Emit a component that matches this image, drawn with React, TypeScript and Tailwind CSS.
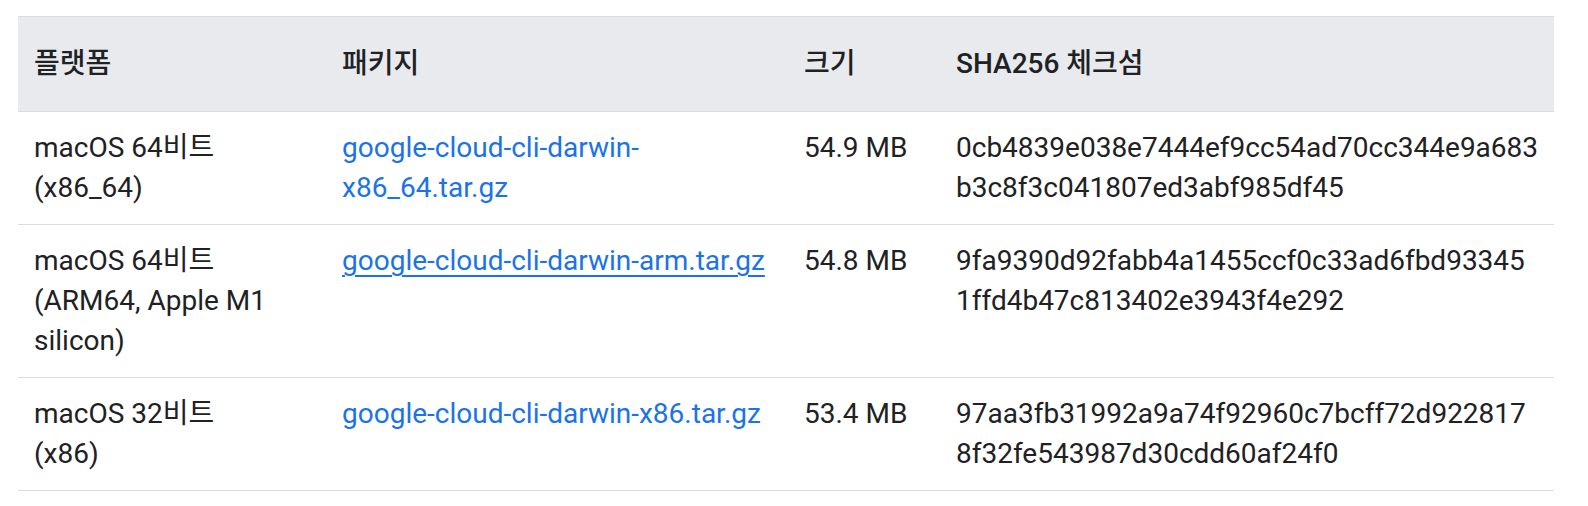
import React from "react";

type Row = {
  platform: React.ReactNode;
  pkg: string;
  underline?: boolean;
  size: string;
  hash: [string, string];
};

const rows: Row[] = [
  {
    platform: "macOS 64비트 (x86_64)",
    pkg: "google-cloud-cli-darwin-x86_64.tar.gz",
    size: "54.9 MB",
    hash: ["0cb4839e038e7444ef9cc54ad70cc344e9a683", "b3c8f3c041807ed3abf985df45"],
  },
  {
    platform: "macOS 64비트 (ARM64, Apple M1 silicon)",
    pkg: "google-cloud-cli-darwin-arm.tar.gz",
    underline: true,
    size: "54.8 MB",
    hash: ["9fa9390d92fabb4a1455ccf0c33ad6fbd93345", "1ffd4b47c813402e3943f4e292"],
  },
  {
    platform: "macOS 32비트 (x86)",
    pkg: "google-cloud-cli-darwin-x86.tar.gz",
    size: "53.4 MB",
    hash: ["97aa3fb31992a9a74f92960c7bcff72d922817", "8f32fe543987d30cdd60af24f0"],
  },
];

export default function App() {
  return (
    <div
      className="w-[1588px] h-[506px] bg-white pt-4 pl-[18px] text-[#202124]"
      style={{ fontFamily: 'Roboto, "Noto Sans CJK KR", sans-serif' }}
    >
      <table className="w-[1536px] table-fixed border-collapse text-[28px] leading-[40px]">
        <colgroup>
          <col className="w-[308px]" />
          <col className="w-[462px]" />
          <col className="w-[152px]" />
          <col className="w-[614px]" />
        </colgroup>
        <thead>
          <tr className="bg-[#e8eaed] border-t border-b border-[#dadce0]">
            <th className="px-4 py-[27px] text-left font-medium align-middle">플랫폼</th>
            <th className="px-4 py-[27px] text-left font-medium align-middle">패키지</th>
            <th className="px-4 py-[27px] text-left font-medium align-middle">크기</th>
            <th className="px-4 py-[27px] text-left font-medium align-middle">SHA256 체크섬</th>
          </tr>
        </thead>
        <tbody>
          {rows.map((r) => (
            <tr key={r.pkg} className="border-b border-[#dadce0]">
              <td className="px-4 py-4 align-top">
                <div className="max-w-[240px]">{r.platform}</div>
              </td>
              <td className="px-4 py-4 align-top">
                <a
                  href="#"
                  className={
                    "text-[#1a73e8] " + (r.underline ? "underline underline-offset-[5px]" : "no-underline")
                  }
                >
                  {r.pkg}
                </a>
              </td>
              <td className="px-4 py-4 align-top">{r.size}</td>
              <td className="px-4 py-4 align-top">
                <div>{r.hash[0]}</div>
                <div>{r.hash[1]}</div>
              </td>
            </tr>
          ))}
        </tbody>
      </table>
    </div>
  );
}
